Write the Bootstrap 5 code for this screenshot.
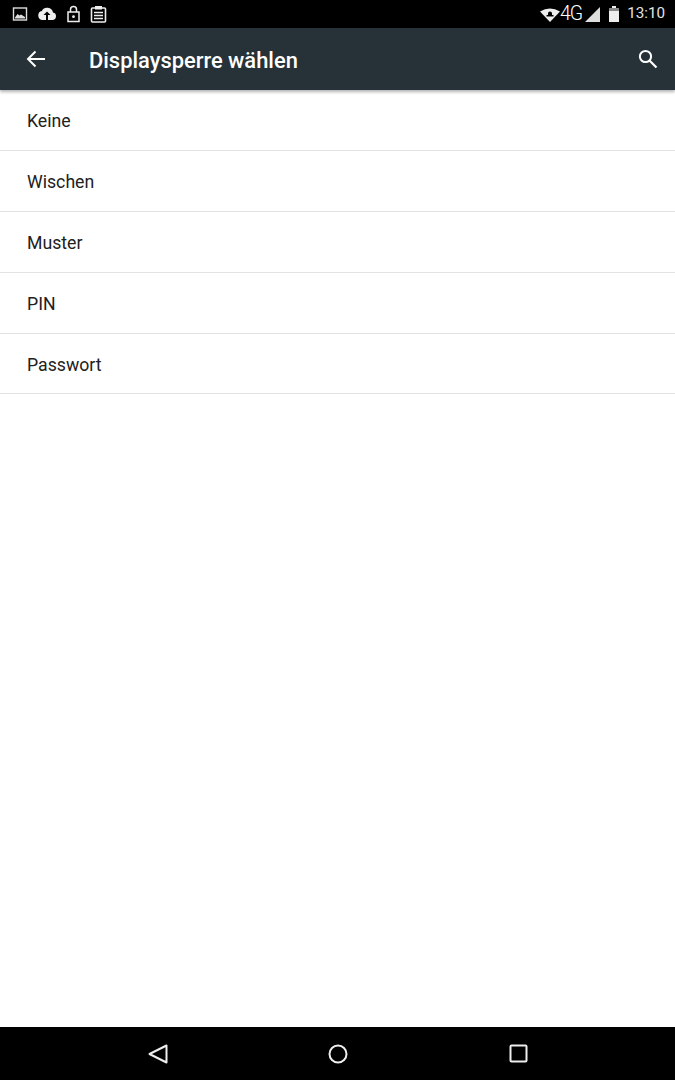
<!DOCTYPE html>
<html lang="de">
<head>
  <meta charset="UTF-8">
  <meta name="viewport" content="width=device-width, initial-scale=1.0">
  <title>Displaysperre wählen</title>
  <link href="https://cdn.jsdelivr.net/npm/bootstrap@5.3.0/dist/css/bootstrap.min.css" rel="stylesheet">
  <style>
    body {
      font-family: Roboto, "Liberation Sans", sans-serif;
      background-color: #fff;
      height: 1080px;
      overflow: hidden;
    }
    .status-bar {
      height: 28px;
      background-color: #000;
      color: #e4e4e4;
      padding: 0 10px 0 12px;
    }
    .status-left { gap: 9px; }
    .status-wifi { margin-top: 1px; }
    .status-4g { font-size: 19.5px; font-weight: 300; letter-spacing: -1px; margin-left: 0; line-height: 1; color: #fff; }
    .status-signal { margin-left: 3px; }
    .status-battery { margin-left: 9px; }
    .status-time { font-size: 15.2px; margin-left: 8px; line-height: 1; }
    .app-toolbar {
      height: 62px;
      background-color: #263238;
      box-shadow: 0 2px 3px rgba(0, 0, 0, 0.3);
      padding: 0 17px 0 26px;
      position: relative;
    }
    .app-title {
      color: #fff;
      font-size: 21.9px;
      font-weight: 500;
      margin: 3px 0 0 43px;
      line-height: 1;
    }
    .lock-list { height: 937px; }
    .lock-row {
      height: 61px;
      padding: 3px 27px 0;
      font-size: 17.7px;
      color: #212121;
      border-bottom: 1px solid #e2e2e2;
    }
    .lock-row:last-child { height: 60px; }
    .nav-bar {
      height: 53px;
      background-color: #000;
      padding: 0 147px 0 147px;
    }
    .nav-home { margin-right: 2px; }
  </style>
</head>
<body class="d-flex flex-column">
  <div class="status-bar d-flex align-items-center justify-content-between">
    <div class="status-left d-flex align-items-center">
      <svg width="16" height="16" viewBox="0 0 16 16"><rect x="1.5" y="2" width="13" height="12" fill="none" stroke="#ddd" stroke-width="1.4"/><path d="M3 11.5 L5.5 8 L7.5 9.5 L9 8.5 L13 11 V12.5 H3Z" fill="#ddd"/></svg>
      <svg width="20" height="16" viewBox="0 0 20 16"><path d="M16 6.5A6 6 0 0 0 4.8 5 4.6 4.6 0 0 0 5 14H15.5A3.8 3.8 0 0 0 16 6.5Z" fill="#eee"/><path d="M10 5.5L6.5 9H9V14H11V9H13.5Z" fill="#000"/></svg>
      <svg width="15" height="18" viewBox="0 0 15 18"><rect x="2" y="7" width="11" height="9.5" fill="none" stroke="#eee" stroke-width="1.5"/><path d="M4.5 7V4.5a3 3 0 0 1 6 0V7" fill="none" stroke="#eee" stroke-width="1.5"/><circle cx="7.5" cy="11.7" r="1.4" fill="#eee"/></svg>
      <svg width="17" height="18" viewBox="0 0 17 18"><rect x="1.5" y="3" width="14" height="14" rx="1" fill="none" stroke="#eee" stroke-width="1.6"/><rect x="5" y="1" width="7" height="3.5" fill="#eee"/><path d="M4 7.5H13M4 10.5H13M4 13.5H13" stroke="#eee" stroke-width="1.4"/></svg>
    </div>
    <div class="d-flex align-items-center">
      <svg class="status-wifi" width="20" height="15" viewBox="0 0 20 15"><path d="M0 4.5Q10 -1.5 20 4.5L10 15Z" fill="#eee"/><path d="M6.5 9.5V8H8V6.5a2 2 0 0 1 4 0V8H13.5V9.5Z" fill="#000"/></svg>
      <span class="status-4g">4G</span>
      <svg class="status-signal" width="15" height="15" viewBox="0 0 15 15"><path d="M15 0V15H0Z" fill="#ddd"/></svg>
      <svg class="status-battery" width="10" height="16" viewBox="0 0 10 16"><path d="M3 0H7V2H10V16H0V2H3Z" fill="#eee"/><rect x="0" y="2" width="10" height="3" fill="#888"/></svg>
      <span class="status-time">13:10</span>
    </div>
  </div>

  <div class="app-toolbar d-flex align-items-center justify-content-between">
    <div class="d-flex align-items-center">
      <svg width="20" height="18" viewBox="0 0 20 18"><path d="M19 9H2.5M9.5 1.5L2 9l7.5 7.5" fill="none" stroke="#fff" stroke-width="2"/></svg>
      <h1 class="app-title">Displaysperre wählen</h1>
    </div>
    <svg width="20" height="20" viewBox="0 0 20 20"><circle cx="7.5" cy="7.5" r="5.6" fill="none" stroke="#fff" stroke-width="2"/><path d="M11.5 11.5L18.5 18.5" stroke="#fff" stroke-width="2.2"/></svg>
  </div>

  <div class="lock-list flex-grow-1">
    <div class="lock-row d-flex align-items-center">Keine</div>
    <div class="lock-row d-flex align-items-center">Wischen</div>
    <div class="lock-row d-flex align-items-center">Muster</div>
    <div class="lock-row d-flex align-items-center">PIN</div>
    <div class="lock-row d-flex align-items-center">Passwort</div>
  </div>

  <div class="nav-bar d-flex align-items-center justify-content-between">
    <svg width="22" height="22" viewBox="0 0 22 22"><path d="M19.5 2.5V19.5L2.5 11Z" fill="none" stroke="#eee" stroke-width="2" stroke-linejoin="round"/></svg>
    <svg class="nav-home" width="20" height="20" viewBox="0 0 20 20"><circle cx="10" cy="10" r="8.5" fill="none" stroke="#eee" stroke-width="2"/></svg>
    <svg width="19" height="19" viewBox="0 0 19 19"><rect x="1.5" y="1.5" width="16" height="16" rx="1" fill="none" stroke="#eee" stroke-width="2"/></svg>
  </div>

  <script src="https://cdn.jsdelivr.net/npm/bootstrap@5.3.0/dist/js/bootstrap.bundle.min.js"></script>
</body>
</html>
